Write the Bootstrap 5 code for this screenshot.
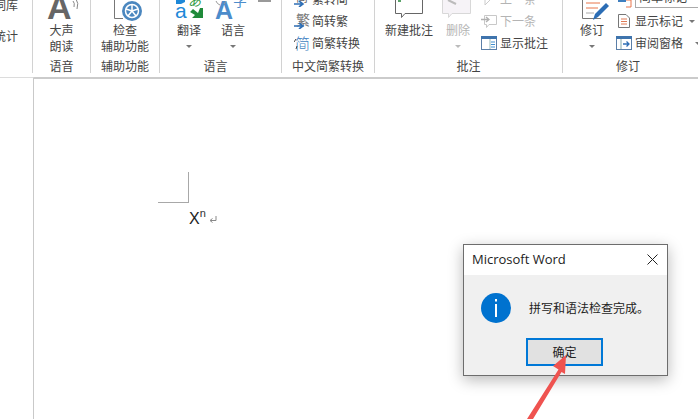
<!DOCTYPE html>
<html lang="zh-CN">
<head>
<meta charset="utf-8">
<title>Word</title>
<link rel="stylesheet" href="https://cdn.jsdelivr.net/npm/bootstrap@5.3.0/dist/css/bootstrap.min.css">
<style>
html,body{width:698px;height:419px;overflow:hidden;background:#fff}
body{font-family:"Noto Sans CJK SC","Liberation Sans",sans-serif;font-size:12px;line-height:16px;color:#444}
.ribbon{height:77px;align-items:flex-start}
.grp{height:73px;border-right:1px solid #d2d2d2;flex:none}
.g0{width:33px}.g1{width:58px}.g2{width:69px}.g3{width:122px;padding-left:7px}
.g4{width:93px;padding-left:12px}.g5{width:188px;padding-left:10px}.g6{width:135px;padding-left:5px;border-right:0}
.grp-top{height:58px;padding-bottom:4px;overflow:hidden;justify-content:flex-start;align-items:flex-end}
.grp-lbl{height:15px;line-height:15px;text-align:center;color:#444;white-space:nowrap}
.lbl3{padding-right:17px}.lbl4{margin-left:-12px}.lbl5{margin-left:-10px}.lbl6{padding-right:10px}
.tool{display:flex;flex-direction:column;align-items:center;white-space:nowrap;flex:none}
.tool svg{display:block;flex:none}
.w57{width:57px}.w68{width:68px}.w44{width:44px}.w48{width:48px}.w34{width:34px;margin-left:8px}
.slot{height:16px;display:flex;align-items:center;justify-content:center}
.tri{width:0;height:0;border-left:3.5px solid transparent;border-right:3.5px solid transparent;border-top:3.5px solid #777}
.tri.off{border-top-color:#bbb}
.bar-mark{width:13px;height:2px;background:#999;align-self:flex-start;margin-left:3px}
.stack{display:flex;flex-direction:column;justify-content:flex-end;flex:none}
.rowi{height:22px;display:flex;align-items:center;white-space:nowrap;flex:none}
.rowi svg{flex:none;display:block}
.gap2px{gap:2px}.gap3px{gap:3px}
.ml6{margin-left:6px}
.off-t{color:#b4b4b4}
.stat{padding-right:14px;text-align:right;white-space:nowrap;height:58px;overflow:hidden;display:flex;flex-direction:column;justify-content:flex-start}
.stat div{height:31px;line-height:16px;flex:none;margin-left:-20px}
.stat .s1{margin-top:-3px}
.selbox{border:1px solid #aaa;border-top:0;height:20px;margin-bottom:2px;width:70px;padding-left:3px;line-height:18px}
.t1{margin-left:3px}.t2{margin-left:9px}
.docarea{height:342px}
.gutter{width:34px;border-top:1px solid #dcdcdc;border-right:1px solid #c9c9c9;flex:none}
.sheet{border-top:2px solid #cbcbcb;flex:1}
.crop{width:31px;height:31px;margin-left:124px;margin-top:93px;border-right:1px solid #a8a8a8;border-bottom:1px solid #a8a8a8}
.docline{margin-left:155px;margin-top:7px;font-family:"Liberation Sans",sans-serif;font-size:16px;line-height:18px;color:#222;display:flex;align-items:center}
.docline sup{font-size:11px;top:-7px;line-height:1;position:relative;vertical-align:baseline;color:#333}
.docline svg{margin-left:3px;margin-top:2px}
.msgbox{position:absolute;left:463px;top:244px;width:205px;height:132px;background:#f0f0f0;border:1px solid #6d6d6d;box-shadow:0 4px 14px rgba(0,0,0,.28)}
.msgtitle{height:30px;background:#fff;padding:0 9px 2px 8px;font-family:"Open Sans","Noto Sans",sans-serif;font-size:13px;color:#222}
.msgbody{height:56px;padding-left:17px;padding-top:10px;color:#222}
.msgbody span{margin-left:18px}
.okbtn{width:77px;height:28px;padding:0;border:2px solid #0078d7;border-radius:0;background:#e1e1e1;color:#222;font-size:12px;line-height:22px;margin:7px 0 0 62px;display:block}
.okbtn:hover{background:#e1e1e1;border-color:#0078d7;color:#222}
.pointer{position:absolute;left:520px;top:350px}
</style>
</head>
<body class="position-relative">

<div class="ribbon d-flex">
  <div class="grp g0 d-flex flex-column">
    <div class="stat"><div class="s1">词库</div><div>统计</div></div>
  </div>

  <div class="grp g1 d-flex flex-column">
    <div class="grp-top d-flex">
      <div class="tool w57">
        <svg width="57" height="22" viewBox="33 0 57 22"><text x="47" y="19" font-family="Liberation Sans" font-weight="700" font-size="34" fill="#666">A</text><path d="M73 1q2 2 1 6M76 -1q3 4 1 10" fill="none" stroke="#888" stroke-width="1"/></svg>
        <div>大声</div><div>朗读</div>
      </div>
    </div>
    <div class="grp-lbl">语音</div>
  </div>

  <div class="grp g2 d-flex flex-column">
    <div class="grp-top d-flex">
      <div class="tool w68">
        <svg width="68" height="22" viewBox="91 0 68 22"><path d="M114.500 0V18.500H123" fill="none" stroke="#777"/><circle cx="132" cy="11" r="10" fill="#4b87bf"/><circle cx="132" cy="11" r="6.500" fill="none" stroke="#fff" stroke-width="1.500"/><path d="M132 5V11M126 9L132 11L138 9M128 16L132 11L136 16" fill="none" stroke="#fff" stroke-width="1.500"/></svg>
        <div>检查</div><div>辅助功能</div>
      </div>
    </div>
    <div class="grp-lbl">辅助功能</div>
  </div>

  <div class="grp g3 d-flex flex-column">
    <div class="grp-top d-flex">
      <div class="tool w44">
        <svg width="44" height="22" viewBox="167 0 44 22"><path d="M176 -1H185V2L181 4H176Z" fill="#1e88d8"/><text x="175" y="18" font-family="Liberation Sans" font-size="21" fill="#1e88d8">a</text><text x="188" y="6" font-family="Noto Sans CJK JP" font-style="italic" font-size="13" fill="#2f9a3f">あ</text><path d="M203 8V18H192L195 15L190 12L193 9L198 13L200 8Z" fill="#1f8a3a"/></svg>
        <div>翻译</div><div class="slot"><div class="tri"></div></div>
      </div>
      <div class="tool w44">
        <svg width="44" height="22" viewBox="211 0 44 22"><text x="215" y="19" font-family="Liberation Sans" font-weight="700" font-size="25" fill="#4c8ccb">A</text><text x="233" y="6" font-size="14" font-family="Noto Sans CJK SC" fill="#4c8ccb">字</text><path d="M216 1q1 3 4 4M226 1q-1 2 -2 3" fill="none" stroke="#999"/></svg>
        <div>语言</div><div class="slot"><div class="tri"></div></div>
      </div>
      <div class="bar-mark"></div>
    </div>
    <div class="grp-lbl lbl3">语言</div>
  </div>

  <div class="grp g4 d-flex flex-column">
    <div class="grp-top d-flex">
      <div class="stack">
        <div class="rowi gap2px">
          <svg width="16" height="16" viewBox="0 0 16 16"><text x="2" y="11" font-size="12" font-family="Noto Sans CJK SC" fill="#666">简</text><path d="M0 13H8M5 10L9 13L5 16" fill="none" stroke="#2f6fb5" stroke-width="1.600"/></svg>
          <span>繁转简</span>
        </div>
        <div class="rowi gap2px">
          <svg width="16" height="16" viewBox="0 0 16 16"><text x="2" y="12" font-size="14" font-family="Noto Sans CJK SC" fill="#777">繁</text><path d="M0 13H8M5 10L9 13L5 16" fill="none" stroke="#2f6fb5" stroke-width="1.600"/></svg>
          <span>简转繁</span>
        </div>
        <div class="rowi gap2px">
          <svg width="16" height="16" viewBox="0 0 16 16"><text x="1" y="14" font-size="15" font-family="Noto Sans CJK SC" font-weight="300" fill="#3f7fbf">简</text><path d="M0 7l2-3M3 11l-1 3" stroke="#444" fill="none"/></svg>
          <span>简繁转换</span>
        </div>
      </div>
    </div>
    <div class="grp-lbl lbl4">中文简繁转换</div>
  </div>

  <div class="grp g5 d-flex flex-column">
    <div class="grp-top d-flex">
      <div class="tool w48">
        <svg width="48" height="22" viewBox="385 0 48 22"><path d="M395.500 -4H422.500V13.500H405L401.500 17.500V13.500H395.500Z" fill="#fff" stroke="#666"/><rect x="398" y="0" width="3" height="2" fill="#5aa36a"/></svg>
        <div>新建批注</div><div class="slot"></div>
      </div>
      <div class="tool w34">
        <svg width="34" height="22" viewBox="441 0 34 22"><path d="M442.500 -4H470.500V13.500H452L448.500 17.500V13.500H442.500Z" fill="#f6f3f7" stroke="#d8d8d8"/><path d="M448 0L456 4" stroke="#bbb" stroke-width="2"/></svg>
        <div class="off-t">删除</div><div class="slot"><div class="tri off"></div></div>
      </div>
      <div class="stack ml6">
        <div class="rowi gap3px off-t">
          <svg width="16" height="16" viewBox="0 0 16 16"><path d="M4 3V14L10 8L4 3Z" fill="none" stroke="#ccc"/></svg>
          <span>上一条</span>
        </div>
        <div class="rowi gap3px off-t">
          <svg width="16" height="16" viewBox="0 0 16 16"><path d="M3.500 2.500H15.500V11.500H8L5.500 14.500V11.500H3.500Z" fill="#fff" stroke="#c8c8c8"/><path d="M0 6.500H7M5 4L8 6.500L5 9" fill="none" stroke="#b0b0b0" stroke-width="1.300"/></svg>
          <span>下一条</span>
        </div>
        <div class="rowi gap3px">
          <svg width="16" height="16" viewBox="0 0 16 16"><rect x=".5" y="1.500" width="15" height="13" fill="#fff" stroke="#5b7fa8"/><rect x="0" y="1" width="16" height="3" fill="#3f74ad"/><path d="M10 7H14M10 9.500H14M10 12H14" stroke="#3f8fd0"/><path d="M9 4V14" stroke="#9bb"/></svg>
          <span>显示批注</span>
        </div>
      </div>
    </div>
    <div class="grp-lbl lbl5">批注</div>
  </div>

  <div class="grp g6 d-flex flex-column">
    <div class="grp-top d-flex">
      <div class="tool w48">
        <svg width="48" height="22" viewBox="568 0 48 22"><path d="M582.500 -4V18.500H601" fill="none" stroke="#777"/><path d="M586 3H600M586 8H598" stroke="#e8744a"/><path d="M586 13H594" stroke="#aaa"/><path d="M593 20L595 14L606 3L609 6L598 17Z" fill="#2b6db5"/></svg>
        <div>修订</div><div class="slot"><div class="tri"></div></div>
      </div>
      <div class="stack">
        <div class="rowi gap3px align-items-end">
          <svg width="16" height="16" viewBox="0 0 16 16"><path d="M2 4H10M2 7H10" stroke="#3f7fbf" stroke-width="2"/><path d="M10 6H15V13H10" fill="none" stroke="#e8744a"/></svg>
          <div class="selbox">简单标记</div>
        </div>
        <div class="rowi gap3px">
          <svg width="16" height="16" viewBox="0 0 16 16"><path d="M2.500 1.500H10L13.500 5V14.500H2.500Z" fill="#fff" stroke="#777"/><path d="M5 6H11M5 8.500H11M5 11H11" stroke="#e07a55"/></svg>
          <span>显示标记</span><div class="tri t1"></div>
        </div>
        <div class="rowi gap3px">
          <svg width="16" height="16" viewBox="0 0 16 16"><rect x=".5" y="1.500" width="15" height="13" fill="#fff" stroke="#5b7fa8"/><rect x="0" y="1" width="16" height="3" fill="#3f74ad"/><path d="M5 4V14" stroke="#8aa"/><path d="M7 9H13M10.500 6.500L13 9L10.500 11.500" fill="none" stroke="#2f6fb5" stroke-width="1.300"/></svg>
          <span>审阅窗格</span><div class="tri t2"></div>
        </div>
      </div>
    </div>
    <div class="grp-lbl lbl6">修订</div>
  </div>
</div>

<div class="docarea d-flex">
  <div class="gutter"></div>
  <div class="sheet">
    <div class="crop"></div>
    <div class="docline"><span>X<sup>n</sup></span><svg width="8" height="8" viewBox="0 0 8 8"><path d="M7 0V4.500H1.500M3.500 2.500L1 4.500L3.500 6.500" fill="none" stroke="#888"/></svg></div>
  </div>
</div>

<div class="msgbox">
  <div class="msgtitle d-flex align-items-center justify-content-between">
    <span>Microsoft Word</span>
    <svg width="11" height="11" viewBox="0 0 11 11"><path d="M.5 .5L10.500 10.500M10.500 .5L.5 10.500" stroke="#222"/></svg>
  </div>
  <div class="msgbody d-flex align-items-center">
    <svg width="30" height="30" viewBox="0 0 30 30"><circle cx="15" cy="15" r="15" fill="#0072cf"/><rect x="14" y="6" width="2" height="2.500" fill="#fff"/><rect x="14" y="11" width="2" height="13" fill="#fff"/></svg>
    <span>拼写和语法检查完成。</span>
  </div>
  <button type="button" class="btn okbtn">确定</button>
</div>

<svg class="pointer" width="60" height="69" viewBox="520 350 60 69"><path d="M566 355L553 366L558.500 369.500L527 419H533L561.500 372L565 374Z" fill="#ef5350"/></svg>

<script src="https://cdn.jsdelivr.net/npm/bootstrap@5.3.0/dist/js/bootstrap.bundle.min.js"></script>
</body>
</html>
